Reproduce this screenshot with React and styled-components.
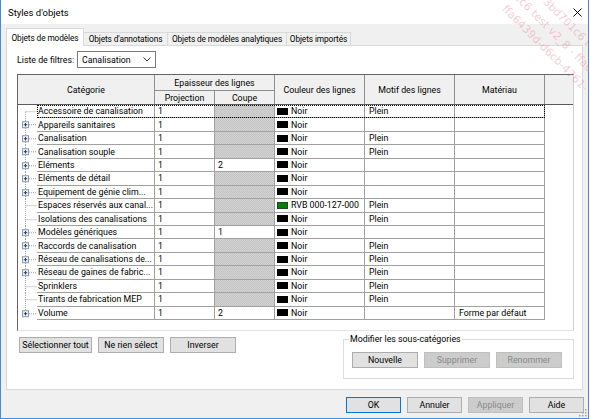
import React from 'react';
import styled, { createGlobalStyle } from 'styled-components';

const Global = createGlobalStyle`
  html, body { margin: 0; padding: 0; background: #fff; }
  body { font-family: Roboto, "Liberation Sans", sans-serif; font-size: 8.8px; color: #000; }
  * { box-sizing: border-box; }
`;

const Window = styled.div`
  position: relative;
  width: 589px;
  height: 419px;
  background: #f0f0f0;
  border: 1px solid #4a8ad8;
  border-top: none;
  display: flex;
  flex-direction: column;
  overflow: hidden;
`;

const TitleBar = styled.div`
  height: 24px;
  flex: 0 0 24px;
  background: #fff;
  display: flex;
  align-items: center;
  justify-content: space-between;
  padding: 0 6px 0 7px;
  font-size: 9.5px;
`;

const TabStrip = styled.div`
  display: flex;
  align-items: flex-end;
  height: 17px;
  margin-top: 4px;
  padding-left: 5px;
  position: relative;
  z-index: 1;
`;

const Tab = styled.div`
  width: ${p => p.$w}px;
  height: ${p => (p.$active ? 18 : 13)}px;
  margin-bottom: ${p => (p.$active ? -1 : 0)}px;
  margin-left: ${p => (p.$first ? 0 : -1)}px;
  display: flex;
  align-items: center;
  justify-content: center;
  background: ${p => (p.$active ? '#fff' : '#f0f0f0')};
  border: 1px solid #d9d9d9;
  border-bottom: none;
  white-space: nowrap;
  font-size: 8.3px;
  letter-spacing: -0.1px;
`;

const Panel = styled.div`
  margin-left: 5px;
  width: 577px;
  height: 345px;
  background: #fff;
  border: 1px solid #d9d9d9;
  padding: 5px 7px 0 10px;
  display: flex;
  flex-direction: column;
`;

const FilterRow = styled.div`
  display: flex;
  align-items: center;
  height: 17px;
`;

const FilterLabel = styled.span`
  width: 60px;
`;

const Select = styled.div`
  width: 79px;
  height: 17px;
  border: 1px solid #7a7a7a;
  background: #fff;
  display: flex;
  align-items: center;
  justify-content: space-between;
  padding: 0 4px 0 4px;
`;

const Table = styled.div`
  margin-top: 6px;
  width: 557px;
  height: 257px;
  background: #fff;
  border: 1px solid;
  border-color: #646464 #cfcfcf #e2e2e2 #646464;
  display: flex;
  flex-direction: column;
`;

const Header = styled.div`
  display: grid;
  grid-template-columns: 137px 60px 60px 90px 90px 90px 28px;
  grid-template-rows: 16px 13px;
  background: #f0f0f0;
  border-bottom: 1px solid #5a5a5a;
`;

const HCell = styled.div`
  grid-row: ${p => p.$row || 'auto'};
  grid-column: ${p => p.$col || 'auto'};
  display: flex;
  align-items: center;
  justify-content: center;
  border-right: ${p => (p.$last ? 'none' : '1px solid #8f8f8f')};
  border-bottom: ${p => (p.$bottom ? '1px solid #8f8f8f' : 'none')};
  white-space: nowrap;
`;

const Body = styled.div`
  display: flex;
  flex-direction: column;
`;

const Row = styled.div`
  display: flex;
  height: 13.4375px;
`;

const Gutter = styled.svg`
  width: 19px;
  height: 100%;
  flex: 0 0 19px;
  display: block;
`;

const RowBody = styled.div`
  display: flex;
  width: 508px;
  border-bottom: 1px solid #a0a0a0;
  outline: ${p => (p.$focus ? '1px dotted #000' : 'none')};
  outline-offset: -1px;
`;

const Cell = styled.div`
  width: ${p => p.$w}px;
  flex: 0 0 ${p => p.$w}px;
  display: flex;
  align-items: center;
  padding-left: ${p => p.$pl ?? 3}px;
  border-right: 1px solid #a0a0a0;
  white-space: nowrap;
  overflow: hidden;
  color: #000;
  background: ${p =>
    p.$off
      ? 'repeating-conic-gradient(#c3c3c3 0 25%, #d3d3d3 0 50%) 0 0 / 2px 2px'
      : '#fff'};
`;

const Swatch = styled.span`
  display: inline-block;
  width: 11px;
  height: 7px;
  margin-right: 3px;
  background: ${p => p.$c};
  border: 1px solid ${p => (p.$c === '#000' ? '#000' : '#1d4d1d')};
`;

const Bottom = styled.div`
  display: flex;
  justify-content: space-between;
  align-items: flex-start;
  margin-top: 3px;
  padding-right: 1px;
`;

const ButtonRow = styled.div`
  display: flex;
  gap: ${p => p.$gap ?? 6}px;
  margin-top: ${p => p.$mt ?? 0}px;
  margin-left: ${p => p.$ml ?? 0}px;
`;

const Button = styled.button`
  width: ${p => p.$w || 66}px;
  height: 16px;
  padding: 0;
  font: inherit;
  font-size: 8.8px;
  background: ${p => (p.disabled ? '#cccccc' : '#e1e1e1')};
  border: 1px solid ${p => (p.$primary ? '#0078d7' : p.disabled ? '#bfbfbf' : '#adadad')};
  color: ${p => (p.disabled ? '#8a8a8a' : '#000')};
  display: flex;
  align-items: center;
  justify-content: center;
  white-space: nowrap;
`;

const Group = styled.fieldset`
  margin: 0;
  width: 231px;
  height: 45px;
  border: 1px solid #dcdcdc;
  padding: 0 8px 0 8px;
  min-width: 0;
`;

const Legend = styled.legend`
  padding: 0 1px;
  margin-left: -3px;
  line-height: 11px;
`;

const Footer = styled.div`
  display: flex;
  justify-content: flex-end;
  gap: 6px;
  margin-top: 7px;
  padding-right: 4px;
`;

const Grip = styled.svg`
  position: absolute;
  right: 1px;
  bottom: 1px;
`;

const Watermark = styled.div`
  position: absolute;
  left: 533px;
  top: -23px;
  width: 220px;
  transform: rotate(45deg);
  transform-origin: 0 0;
  pointer-events: none;
  color: rgba(232, 120, 140, 0.38);
  font-family: "DejaVu Sans", sans-serif;
  font-size: 11px;
  line-height: 17px;
  white-space: nowrap;
`;

const rows = [
  { name: 'Accessoire de canalisation', exp: false, motif: 'Plein' },
  { name: 'Appareils sanitaires', exp: true },
  { name: 'Canalisation', exp: true, motif: 'Plein' },
  { name: 'Canalisation souple', exp: true, motif: 'Plein' },
  { name: 'Eléments', exp: true, coupe: '2' },
  { name: 'Eléments de détail', exp: true },
  { name: 'Equipement de génie clim...', exp: true },
  { name: 'Espaces réservés aux canal...', exp: false, color: '#008000', label: 'RVB 000-127-000', motif: 'Plein' },
  { name: 'Isolations des canalisations', exp: false, motif: 'Plein' },
  { name: 'Modèles génériques', exp: true, coupe: '1' },
  { name: 'Raccords de canalisation', exp: true, motif: 'Plein' },
  { name: 'Réseau de canalisations de...', exp: true, motif: 'Plein' },
  { name: 'Réseau de gaines de fabric...', exp: true, motif: 'Plein' },
  { name: 'Sprinklers', exp: false, motif: 'Plein' },
  { name: 'Tirants de fabrication MEP', exp: false, motif: 'Plein' },
  { name: 'Volume', exp: true, coupe: '2', mat: 'Forme par défaut' },
];

function Tree({ first, last, exp }) {
  const h = 13.4375;
  const m = h / 2;
  return (
    <Gutter viewBox={`0 0 19 ${h}`} preserveAspectRatio="none">
      <line x1="7.5" y1={first ? m : 0} x2="7.5" y2={last ? m : h} stroke="#a0a0a0" strokeDasharray="1 1" />
      <line x1={exp ? 11 : 7.5} y1={m} x2="19" y2={m} stroke="#a0a0a0" strokeDasharray="1 1" />
      {exp && (
        <g>
          <rect x="4.5" y={m - 3} width="6" height="6" fill="#eef1f6" stroke="#8f9aa8" />
          <line x1="5.8" y1={m} x2="9.2" y2={m} stroke="#1f3b68" />
          <line x1="7.5" y1={m - 1.7} x2="7.5" y2={m + 1.7} stroke="#1f3b68" />
        </g>
      )}
    </Gutter>
  );
}

export default function App() {
  return (
    <>
      <Global />
      <Window>
        <TitleBar>
          <span>Styles d'objets</span>
          <svg width="9" height="9" viewBox="0 0 9 9">
            <path d="M0.5 0.5 L8.5 8.5 M8.5 0.5 L0.5 8.5" stroke="#000" strokeWidth="1" />
          </svg>
        </TitleBar>
        <TabStrip>
          <Tab $active $first $w={78}>Objets de modèles</Tab>
          <Tab $w={85}>Objets d'annotations</Tab>
          <Tab $w={120}>Objets de modèles analytiques</Tab>
          <Tab $w={65}>Objets importés</Tab>
        </TabStrip>
        <Panel>
          <FilterRow>
            <FilterLabel>Liste de filtres:</FilterLabel>
            <Select>
              <span>Canalisation</span>
              <svg width="8" height="5" viewBox="0 0 8 5">
                <path d="M0.5 0.5 L4 4 L7.5 0.5" fill="none" stroke="#333" strokeWidth="1" />
              </svg>
            </Select>
          </FilterRow>
          <Table>
            <Header>
              <HCell $row="1 / 3">Catégorie</HCell>
              <HCell $col="2 / 4" $bottom>Epaisseur des lignes</HCell>
              <HCell $row="1 / 3" $col="4">Couleur des lignes</HCell>
              <HCell $row="1 / 3" $col="5">Motif des lignes</HCell>
              <HCell $row="1 / 3" $col="6">Matériau</HCell>
              <HCell $row="1 / 3" $col="7" $last />
              <HCell $row="2" $col="2">Projection</HCell>
              <HCell $row="2" $col="3">Coupe</HCell>
            </Header>
            <Body>
              {rows.map((r, i) => (
                <Row key={r.name}>
                  <Tree first={i === 0} last={i === rows.length - 1} exp={r.exp} />
                  <RowBody $focus={i === 0}>
                    <Cell $w={118} $pl={1}>{r.name}</Cell>
                    <Cell $w={60}>1</Cell>
                    <Cell $w={60} $off={!r.coupe}>{r.coupe || ''}</Cell>
                    <Cell $w={90} $pl={2}>
                      <Swatch $c={r.color || '#000'} />
                      {r.label || 'Noir'}
                    </Cell>
                    <Cell $w={90} $pl={4}>{r.motif || ''}</Cell>
                    <Cell $w={90} $pl={4}>{r.mat || ''}</Cell>
                  </RowBody>
                </Row>
              ))}
            </Body>
          </Table>
          <Bottom>
            <ButtonRow $mt={3} $ml={2}>
              <Button $w={73}>Sélectionner tout</Button>
              <Button>Ne rien sélect</Button>
              <Button>Inverser</Button>
            </ButtonRow>
            <Group>
              <Legend>Modifier les sous-catégories</Legend>
              <ButtonRow $mt={7}>
                <Button>Nouvelle</Button>
                <Button disabled>Supprimer</Button>
                <Button disabled>Renommer</Button>
              </ButtonRow>
            </Group>
          </Bottom>
        </Panel>
        <Footer>
          <Button $w={55} $primary>OK</Button>
          <Button $w={55}>Annuler</Button>
          <Button $w={55} disabled>Appliquer</Button>
          <Button $w={55}>Aide</Button>
        </Footer>
        <Grip width="8" height="8" viewBox="0 0 8 8">
          {[[6, 0], [6, 3], [3, 3], [6, 6], [3, 6], [0, 6]].map(([x, y]) => (
            <rect key={`${x}-${y}`} x={x} y={y} width="1.5" height="1.5" fill="#a0a0a0" />
          ))}
        </Grip>
        <Watermark>
          <div>c6 - 3bd701c6 test v2_8</div>
          <div>1c6 test v2_8 - ffa6439d</div>
          <div>ffa6439d-d6cb-4761-</div>
        </Watermark>
      </Window>
    </>
  );
}
